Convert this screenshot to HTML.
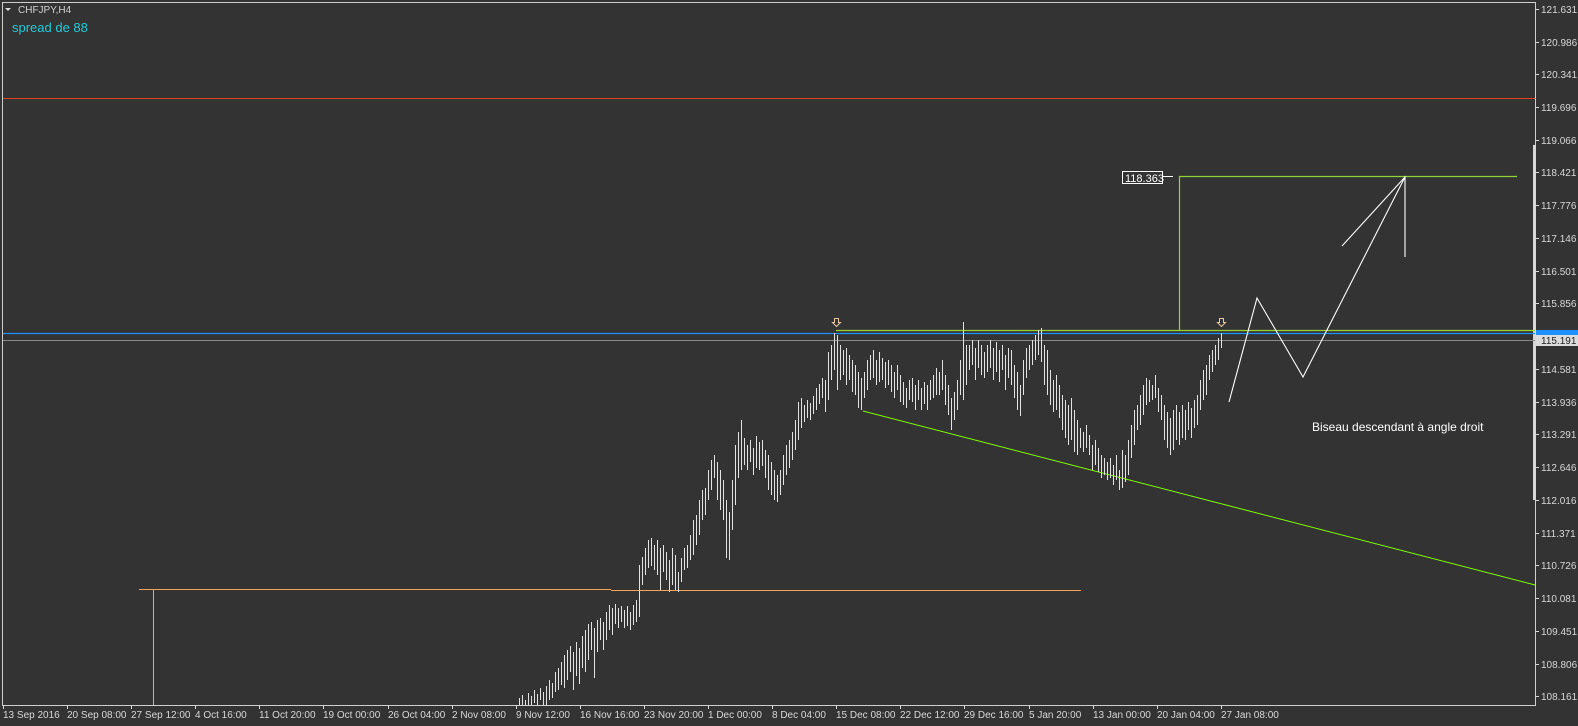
<!DOCTYPE html>
<html><head><meta charset="utf-8"><style>
html,body{margin:0;padding:0;background:#333;width:1578px;height:726px;overflow:hidden}
svg{display:block}
text{font-family:"Liberation Sans",sans-serif}
</style></head><body>
<svg width="1578" height="726" viewBox="0 0 1578 726" xmlns="http://www.w3.org/2000/svg">
<rect width="1578" height="726" fill="#333"/>
<rect x="2.5" y="2.5" width="1533" height="703" fill="none" stroke="#cfcfcf" stroke-width="1"/>
<rect x="1533" y="145" width="3" height="355" fill="#d8d8d8"/>
<polygon points="5,8 11,8 8,11" fill="#ddd"/>
<text x="18" y="13" font-size="10" fill="#d0d0d0">CHFJPY,H4</text>
<text x="12" y="32" font-size="13" fill="#22cbd8">spread de 88</text>
<line x1="3" y1="98.5" x2="1535" y2="98.5" stroke="#e2421a" stroke-width="1"/>
<line x1="3" y1="333.5" x2="1535" y2="333.5" stroke="#1e90ff" stroke-width="1.2"/>
<line x1="3" y1="340.5" x2="1535" y2="340.5" stroke="#8a8a8a" stroke-width="1"/>
<line x1="836" y1="330.5" x2="1535" y2="330.5" stroke="#9ad430" stroke-width="1.2"/>
<line x1="863" y1="411" x2="1535" y2="585" stroke="#7fff00" stroke-width="1"/>
<polyline points="139,589.5 611,589.5" stroke="#f4a45c" fill="none"/>
<polyline points="611,590.5 1081,590.5" stroke="#f4a45c" fill="none"/>
<line x1="153.5" y1="589" x2="153.5" y2="705" stroke="#f4a45c"/>
<polyline points="1179.5,330 1179.5,176.5 1517,176.5" stroke="#8fd43a" fill="none" stroke-width="1.2"/>
<rect x="1122.5" y="171.5" width="40" height="12" fill="#333" stroke="#fff"/>
<text x="1125" y="182" font-size="11" fill="#fff">118.363</text>
<line x1="1163" y1="176.5" x2="1173" y2="176.5" stroke="#fff"/>
<polyline points="1229,402 1257,298 1303,377 1405,177" stroke="#fff" fill="none" stroke-width="1.1"/>
<polyline points="1342,246 1405,177 1405,257" stroke="#fff" fill="none" stroke-width="1.1"/>
<text x="1312" y="431" font-size="12" fill="#fff">Biseau descendant à angle droit</text>
<path stroke="#e2e2e2" stroke-width="1" fill="none" d="
M519.5 698V705M522.5 695V705M525.5 700V705M528.5 693V705M531.5 696V705M534.5 690V703M537.5 694V705M540.5 688V700M543.5 692V705
M546.5 686V705M549.5 680V700M552.5 683V698M555.5 672V692M558.5 668V690M561.5 662V685M564.5 655V688M567.5 650V680M570.5 646V672M573.5 652V690M576.5 642V676M579.5 648V684M582.5 636V668M585.5 630V672M588.5 624V660M591.5 622V650M594.5 628V678M597.5 620V652M600.5 618V640M603.5 622V650M606.5 612V640M609.5 605V630M612.5 608V635M615.5 604V624M618.5 608V628M621.5 606V622M624.5 610V628M627.5 606V626M630.5 612V630M633.5 605V625M636.5 600V622M639.5 565V617M642.5 557V585M645.5 548V575M648.5 540V568M651.5 538V566M654.5 545V570M657.5 540V575M660.5 548V590M663.5 545V572M666.5 552V580M669.5 560V592M672.5 548V585M675.5 555V590M678.5 572V592M681.5 558V582M684.5 548V570M687.5 545V568M690.5 535V560M693.5 520V555M696.5 515V545M699.5 500V535M702.5 490V520M705.5 488V515M708.5 470V500M711.5 460V490M714.5 455V478M717.5 462V500M720.5 470V510M723.5 480V520M726.5 500V558M729.5 512V560M732.5 480V530M735.5 445V505M738.5 432V478M741.5 420V470M744.5 438V465M747.5 445V470M750.5 440V462M753.5 448V475M756.5 436V468M759.5 442V470M762.5 440V466M765.5 450V478M768.5 455V490M771.5 462V495M774.5 470V500M777.5 475V502M780.5 470V495M783.5 455V485M786.5 445V475M789.5 440V468M792.5 432V460M795.5 420V450M798.5 402V440M801.5 398V428M804.5 405V422M807.5 400V418M810.5 403V420M813.5 396V414M816.5 388V410M819.5 384V404M822.5 378V398M825.5 380V412M828.5 352V400M831.5 345V380M834.5 333V370M837.5 335V390M840.5 345V380M843.5 350V375M846.5 348V385M849.5 355V380M852.5 360V392M855.5 365V395M858.5 372V408M861.5 378V410M864.5 372V398M867.5 360V390M870.5 355V380M873.5 350V378M876.5 360V385M879.5 352V382M882.5 358V380M885.5 362V388M888.5 360V385M891.5 365V392M894.5 372V398M897.5 365V390M900.5 375V402M903.5 382V405M906.5 388V408M909.5 380V400M912.5 378V402M915.5 385V410M918.5 380V400M921.5 388V410M924.5 382V404M927.5 385V410M930.5 380V400M933.5 375V398M936.5 368V395M939.5 372V395M942.5 360V390M945.5 375V405M948.5 385V415M951.5 398V430M954.5 392V420M957.5 380V410M960.5 360V395M963.5 322V400M966.5 345V385M969.5 345V370M972.5 340V365M975.5 348V380M978.5 340V368M981.5 345V375M984.5 352V378M987.5 345V372M990.5 340V368M993.5 348V380M996.5 342V372M999.5 350V382M1002.5 345V370M1005.5 355V390M1008.5 348V378M1011.5 350V385M1014.5 365V398M1017.5 372V410M1020.5 385V416M1023.5 360V395M1026.5 348V378M1029.5 345V370M1032.5 340V365M1035.5 335V360M1038.5 330V355M1041.5 328V362M1044.5 345V385M1047.5 350V395M1050.5 370V405M1053.5 380V412M1056.5 375V410M1059.5 385V418M1062.5 395V430M1065.5 400V438M1068.5 405V445M1071.5 398V440M1074.5 410V452M1077.5 420V455M1080.5 428V448M1083.5 432V452M1086.5 425V448M1089.5 435V455M1092.5 445V470M1095.5 440V465M1098.5 448V472M1101.5 455V478M1104.5 458V475M1107.5 462V480M1110.5 458V478M1113.5 465V485M1116.5 455V480M1119.5 470V490M1122.5 450V488M1125.5 455V482M1128.5 440V475M1131.5 425V458M1134.5 410V445M1137.5 405V430M1140.5 395V425M1143.5 385V415M1146.5 378V405M1149.5 380V402M1152.5 385V400M1155.5 375V398M1158.5 388V412M1161.5 395V420M1164.5 405V440M1167.5 412V448M1170.5 418V455M1173.5 410V450M1176.5 405V440M1179.5 412V445M1182.5 405V438M1185.5 410V440M1188.5 402V430M1191.5 408V438M1194.5 400V428M1197.5 395V425M1200.5 380V410M1203.5 370V400M1206.5 365V395M1209.5 355V380M1212.5 350V372M1215.5 345V365M1218.5 338V360M1221.5 333V348"/>
<g fill="none" stroke="#e8c8a0" stroke-width="1">
<path d="M834.5,318.5 h4 v4 h2 l-4,4 l-4,-4 h2 z"/>
<path d="M1219.5,318.5 h4 v4 h2 l-4,4 l-4,-4 h2 z"/>
</g>
<g stroke="#d8d8d8">
<path d="M1536 9.5h3M1536 42.5h3M1536 74.5h3M1536 107.5h3M1536 140.5h3M1536 172.5h3M1536 205.5h3M1536 238.5h3M1536 271.5h3M1536 303.5h3M1536 369.5h3M1536 402.5h3M1536 434.5h3M1536 467.5h3M1536 500.5h3M1536 533.5h3M1536 565.5h3M1536 598.5h3M1536 631.5h3M1536 664.5h3M1536 696.5h3"/>
<path d="M3.5 705v4M67.5 705v4M131.5 705v4M195.5 705v4M259.5 705v4M323.5 705v4M388.5 705v4M452.5 705v4M516.5 705v4M580.5 705v4M644.5 705v4M708.5 705v4M772.5 705v4M836.5 705v4M900.5 705v4M964.5 705v4M1029.5 705v4M1093.5 705v4M1157.5 705v4M1221.5 705v4"/>
</g>
<g font-size="10" fill="#d8d8d8">
<text x="1541" y="13">121.631</text><text x="1541" y="46">120.986</text><text x="1541" y="78">120.341</text><text x="1541" y="111">119.696</text><text x="1541" y="144">119.066</text><text x="1541" y="176">118.421</text><text x="1541" y="209">117.776</text><text x="1541" y="242">117.146</text><text x="1541" y="275">116.501</text><text x="1541" y="307">115.856</text><text x="1541" y="373">114.581</text><text x="1541" y="406">113.936</text><text x="1541" y="438">113.291</text><text x="1541" y="471">112.646</text><text x="1541" y="504">112.016</text><text x="1541" y="537">111.371</text><text x="1541" y="569">110.726</text><text x="1541" y="602">110.081</text><text x="1541" y="635">109.451</text><text x="1541" y="668">108.806</text><text x="1541" y="700">108.161</text>
<text x="3" y="718">13 Sep 2016</text><text x="67" y="718">20 Sep 08:00</text><text x="131" y="718">27 Sep 12:00</text><text x="195" y="718">4 Oct 16:00</text><text x="259" y="718">11 Oct 20:00</text><text x="323" y="718">19 Oct 00:00</text><text x="388" y="718">26 Oct 04:00</text><text x="452" y="718">2 Nov 08:00</text><text x="516" y="718">9 Nov 12:00</text><text x="580" y="718">16 Nov 16:00</text><text x="644" y="718">23 Nov 20:00</text><text x="708" y="718">1 Dec 00:00</text><text x="772" y="718">8 Dec 04:00</text><text x="836" y="718">15 Dec 08:00</text><text x="900" y="718">22 Dec 12:00</text><text x="964" y="718">29 Dec 16:00</text><text x="1029" y="718">5 Jan 20:00</text><text x="1093" y="718">13 Jan 00:00</text><text x="1157" y="718">20 Jan 04:00</text><text x="1221" y="718">27 Jan 08:00</text>
</g>
<rect x="1536" y="330" width="42" height="6" fill="#1e90ff"/>
<rect x="1536" y="335" width="42" height="11" fill="#dcdcdc"/>
<text x="1541" y="344" font-size="10" fill="#222">115.191</text>
</svg>
</body></html>
